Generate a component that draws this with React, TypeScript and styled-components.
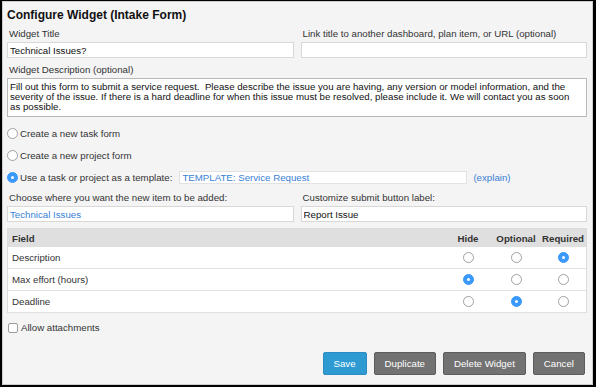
import React from "react";
import styled, { createGlobalStyle } from "styled-components";

const GlobalStyle = createGlobalStyle`
  html, body {
    margin: 0;
    padding: 0;
    background: #000;
  }
  body {
    font-family: "Liberation Sans", Arial, sans-serif;
  }
  * {
    box-sizing: border-box;
  }
`;

const fields = [
  { name: "Description", value: "required" },
  { name: "Max effort (hours)", value: "hide" },
  { name: "Deadline", value: "optional" },
];

const options = ["hide", "optional", "required"];

const description =
  "Fill out this form to submit a service request.  Please describe the issue you are having, any version or model information, and the\nseverity of the issue. If there is a hard deadline for when this issue must be resolved, please include it. We will contact you as soon\nas possible.";

const Radio = ({ checked }: { checked?: boolean }) => <RadioDot $checked={checked} />;

const App = () => (
  <Frame>
    <GlobalStyle />
    <Panel>
      <Title>Configure Widget (Intake Form)</Title>

      <TwoCols $top="6px">
        <div>
          <Label>Widget Title</Label>
          <TextInput readOnly value="Technical Issues?" />
        </div>
        <div>
          <Label>Link title to another dashboard, plan item, or URL (optional)</Label>
          <TextInput readOnly value="" />
        </div>
      </TwoCols>

      <Block $top="6px">
        <Label>Widget Description (optional)</Label>
        <TextArea readOnly value={description} />
      </Block>

      <RadioList>
        <RadioRow>
          <Radio />
          Create a new task form
        </RadioRow>
        <RadioRow>
          <Radio />
          Create a new project form
        </RadioRow>
        <RadioRow>
          <Radio checked />
          Use a task or project as a template:
          <TemplateInput readOnly value="TEMPLATE: Service Request" />
          <Link>(explain)</Link>
        </RadioRow>
      </RadioList>

      <TwoCols $top="4px">
        <div>
          <Label>Choose where you want the new item to be added:</Label>
          <TextInput readOnly value="Technical Issues" $blue />
        </div>
        <div>
          <Label>Customize submit button label:</Label>
          <TextInput readOnly value="Report Issue" />
        </div>
      </TwoCols>

      <Table>
        <HeadRow>
          <FieldCell>Field</FieldCell>
          <ChoiceCell>Hide</ChoiceCell>
          <ChoiceCell>Optional</ChoiceCell>
          <ChoiceCell>Required</ChoiceCell>
        </HeadRow>
        {fields.map((f) => (
          <BodyRow key={f.name}>
            <FieldCell>{f.name}</FieldCell>
            {options.map((o) => (
              <ChoiceCell key={o}>
                <Radio checked={f.value === o} />
              </ChoiceCell>
            ))}
          </BodyRow>
        ))}
      </Table>

      <CheckRow>
        <CheckBox />
        Allow attachments
      </CheckRow>

      <ButtonBar>
        <Button $primary>Save</Button>
        <Button>Duplicate</Button>
        <Button>Delete Widget</Button>
        <Button>Cancel</Button>
      </ButtonBar>
    </Panel>
  </Frame>
);

const Frame = styled.div`
  width: 596px;
  height: 387px;
  padding: 1px 3px 2px 2px;
  background: #000;
`;
const Panel = styled.div`
  height: 100%;
  background: #f4f4f4;
  border: 1px solid #cdcdcd;
  padding: 6px 5px 9px 4px;
  display: flex;
  flex-direction: column;
  color: #222;
  font-size: 9.7px;
`;
const Title = styled.h2`
  margin: 0;
  font-size: 12px;
  line-height: 14px;
  font-weight: bold;
  color: #111;
`;
const TwoCols = styled.div<{ $top: string }>`
  display: grid;
  grid-template-columns: 1fr 1fr;
  column-gap: 7px;
  margin-top: ${(p) => p.$top};
`;
const Block = styled.div<{ $top: string }>`
  margin-top: ${(p) => p.$top};
`;
const Label = styled.div`
  line-height: 12px;
  margin-bottom: 2px;
  padding-left: 2px;
  color: #333;
`;
const TextInput = styled.input<{ $blue?: boolean }>`
  display: block;
  width: 100%;
  height: 16px;
  margin: 0;
  padding: 0 2px;
  border: 1px solid #d8d8d8;
  background: #fff;
  font-family: inherit;
  font-size: 9.7px;
  color: ${(p) => (p.$blue ? "#3a7fd5" : "#111")};
  outline: none;
`;
const TextArea = styled.textarea`
  display: block;
  width: 100%;
  height: 39px;
  margin: 0;
  padding: 3px 2px 0;
  border: 1px solid #b9b9b9;
  background: #fff;
  font-family: inherit;
  font-size: 9.7px;
  line-height: 10.2px;
  color: #111;
  resize: none;
  overflow: hidden;
  white-space: pre;
  outline: none;
`;
const RadioList = styled.div`
  margin-top: 5px;
  display: flex;
  flex-direction: column;
`;
const RadioRow = styled.div`
  height: 22px;
  display: flex;
  align-items: center;
  color: #333;
`;
const RadioDot = styled.span<{ $checked?: boolean }>`
  position: relative;
  display: inline-block;
  flex: none;
  width: 11px;
  height: 11px;
  margin-right: 2px;
  border-radius: 50%;
  border: 1px solid ${(p) => (p.$checked ? "#3b99fc" : "#a0a0a0")};
  background: ${(p) => (p.$checked ? "#3b99fc" : "#fff")};
  &::after {
    content: "";
    display: ${(p) => (p.$checked ? "block" : "none")};
    position: absolute;
    left: 3px;
    top: 3px;
    width: 3px;
    height: 3px;
    border-radius: 50%;
    background: #fff;
  }
`;
const TemplateInput = styled.input`
  width: 288px;
  height: 13px;
  margin: 0 0 0 7px;
  padding: 0 2px;
  border: 1px solid #e2e2e2;
  background: #fff;
  font-family: inherit;
  font-size: 9.7px;
  color: #3a7fd5;
  outline: none;
`;
const Link = styled.span`
  margin-left: 6px;
  color: #3a7fd5;
`;
const Table = styled.div`
  margin-top: 6px;
  border: 1px solid #dcdcdc;
  border-bottom: none;
  background: #fff;
`;
const HeadRow = styled.div`
  display: grid;
  grid-template-columns: 1fr 48px 48px 46px;
  height: 18px;
  align-items: center;
  background: #dfdfdf;
  font-weight: bold;
  color: #333;
`;
const BodyRow = styled.div`
  display: grid;
  grid-template-columns: 1fr 48px 48px 46px;
  height: 22px;
  align-items: center;
  border-bottom: 1px solid #e0e0e0;
  color: #333;
`;
const FieldCell = styled.div`
  padding-left: 4px;
`;
const ChoiceCell = styled.div`
  display: flex;
  justify-content: center;
  align-items: center;
  & > span {
    margin-right: 0;
  }
`;
const CheckRow = styled.div`
  margin-top: 9px;
  line-height: 12px;
  display: flex;
  align-items: center;
  color: #333;
`;
const CheckBox = styled.span`
  display: inline-block;
  width: 10px;
  height: 10px;
  margin: 0 3px 0 1px;
  border: 1px solid #9c9c9c;
  border-radius: 2px;
  background: #fff;
`;
const ButtonBar = styled.div`
  margin-top: auto;
  display: flex;
  justify-content: flex-end;
  gap: 7px;
  padding-right: 2px;
`;
const Button = styled.button<{ $primary?: boolean }>`
  height: 23px;
  padding: 0 10px;
  border: 1px solid ${(p) => (p.$primary ? "#2a8cc0" : "#5c5c5c")};
  border-radius: 2px;
  background: ${(p) => (p.$primary ? "#2d9bd2" : "#727272")};
  color: #fff;
  font-family: inherit;
  font-size: 9.7px;
  cursor: pointer;
`;

export default App;
